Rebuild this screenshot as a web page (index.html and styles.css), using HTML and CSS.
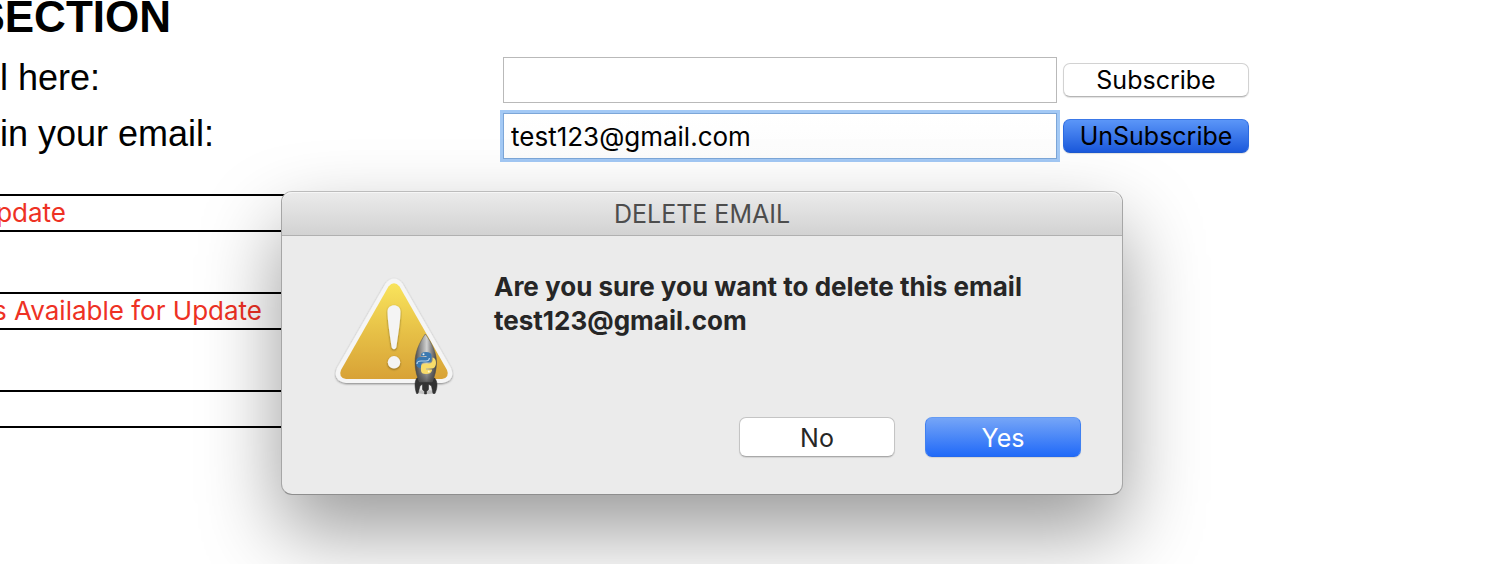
FILE: index.html
```html
<!DOCTYPE html>
<html lang="en">
<head>
<meta charset="utf-8">
<title>Email subscriptions</title>
<link rel="stylesheet" href="styles.css">
</head>
<body>
<main class="page">
  <h1 class="heading"><span>SECTION</span></h1>
  <form class="form">
    <label class="form-label" for="subscribe">l here:</label>
    <input class="entry" id="subscribe" type="text">
    <button class="push" type="button">Subscribe</button>
    <label class="form-label" for="unsubscribe">in your email:</label>
    <input class="entry entry-focus" id="unsubscribe" type="text" value="test123@gmail.com">
    <button class="push push-active" type="button">UnSubscribe</button>
  </form>
  <section class="notices">
    <p class="notice"><span class="notice-text notice-short">pdate</span></p>
    <p class="notice"><span class="notice-text">s Available for Update</span></p>
    <p class="notice"></p>
  </section>
</main>
<div class="dialog" role="alertdialog" aria-labelledby="dialog-title" aria-describedby="dialog-message">
  <h2 class="dialog-title" id="dialog-title">DELETE EMAIL</h2>
  <div class="dialog-body">
    <svg class="dialog-icon" viewBox="0 0 120 120" aria-hidden="true">
      <defs>
        <linearGradient id="gold" x1="0" y1="0" x2="0" y2="1">
          <stop offset="0" stop-color="#f9e45c"/>
          <stop offset=".5" stop-color="#e7c147"/>
          <stop offset="1" stop-color="#d8a236"/>
        </linearGradient>
        <linearGradient id="steel" x1="0" y1="0" x2="1" y2="0">
          <stop offset="0" stop-color="#484848"/>
          <stop offset=".25" stop-color="#8c8c8c"/>
          <stop offset=".55" stop-color="#d2d2d2"/>
          <stop offset=".75" stop-color="#8a8a8a"/>
          <stop offset="1" stop-color="#484848"/>
        </linearGradient>
        <linearGradient id="shade" x1="0" y1="0" x2="0" y2="1">
          <stop offset=".6" stop-color="#333" stop-opacity="0"/>
          <stop offset="1" stop-color="#333" stop-opacity=".7"/>
        </linearGradient>
        <filter id="drop" x="-10%" y="-10%" width="120%" height="125%">
          <feDropShadow dx="0" dy="1" stdDeviation="1" flood-opacity=".45"/>
        </filter>
      </defs>
      <path d="M51.5 6.5Q60-3.5 68.500 6.500L117 91Q122 104 108 106H12Q-2 104 3 91Z" fill="#f5f5f5" filter="url(#drop)"/>
      <path d="M54.500 9.500Q60 3 65.500 9.500L113 93Q116 100.500 108 102H12Q4 100.500 7 93Z" fill="url(#gold)"/>
      <g fill="#f4f4f4" filter="url(#drop)">
        <path d="M53.500 34.500C53.500 26 66.500 26 66.500 34.500C66.500 43 64.300 57 62.500 69.500C62 73 58 73 57.500 69.500C55.700 57 53.500 43 53.500 34.500Z"/>
        <circle cx="60" cy="85.300" r="6.200"/>
      </g>
      <ellipse cx="92" cy="115" rx="9" ry="2" fill="#999" opacity=".5"/>
      <path d="M83 101C80.500 104 80.500 110 82.500 116.500H84L86 109L88.500 107V112.500L90.500 114.500V117H92.500V114.500L94.500 112.500V107L97.500 109L99 116.500H101C104 110 103.500 104 100.500 101Z" fill="#333" stroke="#222" stroke-width=".5"/>
      <path d="M91.300 57C98 66 102.500 76 102.500 85C102.500 93 100.500 100 98 105H85.500C83 100 81 93 81 85C81 76 85 66 91.300 57Z" fill="url(#steel)"/>
      <path d="M91.300 57C98 66 102.500 76 102.500 85C102.500 93 100.500 100 98 105H85.500C83 100 81 93 81 85C81 76 85 66 91.300 57Z" fill="url(#shade)" stroke="#505050" stroke-width=".5"/>
      <path d="M87 80V78Q87 75 92 75Q97.500 75 97.500 78.500V82Q97.500 85.500 94 85.500H90Q87 85.500 87 88.500V91Q82 91 82 85.500Q82 80 87 80H92.500V79H87Z" fill="#3b78b0"/>
      <path d="M98.500 80.500Q102 81 102 86Q102 91.500 97 91.500H92V92.500H98V93.500Q97 97 92 97Q87 97 87 93.500V90Q87 86.500 90.500 86.500H94.500Q98.500 86.500 98.500 82.500Z" fill="#f8dc6a"/>
      <path d="M83 87Q83 84 87 84H92Q95 84 95.500 81" fill="none" stroke="#b9d3ea" stroke-width="1.200"/>
      <circle cx="89.500" cy="77.300" r="1" fill="#e8f1f8"/>
      <circle cx="94.800" cy="94.500" r="1" fill="#fff8d5"/>
    </svg>
    <p class="dialog-message" id="dialog-message">Are you sure you want to delete this email test123@gmail.com</p>
  </div>
  <div class="dialog-actions">
    <button class="choice" type="button">No</button>
    <button class="choice choice-default" type="button">Yes</button>
  </div>
</div>
</body>
</html>
```
FILE: styles.css
```css
* {
  box-sizing: border-box;
}

body {
  margin: 0;
  background: #fff;
  color: #000;
  font-family: Inter, "Noto Sans", sans-serif;
  font-size: 25px;
  overflow: hidden;
}

.page {
  overflow: hidden;
}

.heading {
  display: flex;
  justify-content: flex-end;
  width: 171px;
  height: 52px;
  margin: 0;
  font: bold 44px/34px "Liberation Sans", Arial, sans-serif;
}

.form {
  display: grid;
  grid-template-columns: 497px minmax(0, 1fr) 186px;
  grid-auto-rows: 56px;
  column-gap: 6px;
  align-items: center;
  padding-right: 249px;
}

.form-label {
  font: 36px/48px "Liberation Sans", Arial, sans-serif;
  padding-bottom: 4px;
}

.entry {
  width: 100%;
  height: 46px;
  padding: 0 7px;
  border: 1px solid #b9b9b9;
  border-radius: 0;
  outline: none;
  background: #fff;
  color: #000;
  font: inherit;
  font-size: 26px;
}

.entry-focus {
  border-color: #7ca6d8;
  background: linear-gradient(#fff, #fcfcfc);
  box-shadow: 0 0 0 3px #a3c9f5;
}

.push {
  height: 34px;
  padding: 0;
  border: 1px solid #d2d2d2;
  border-bottom-color: #b5b5b5;
  border-radius: 7px;
  background: #fff;
  box-shadow: 0 1px 1px rgba(0, 0, 0, .12);
  color: #000;
  font: inherit;
  line-height: 30px;
}

.push-active {
  border-color: #3a78e8 #2c6ae0 #1c58cf;
  background: linear-gradient(#5b96f8, #1b59dc);
}

.notices {
  display: grid;
  gap: 60px;
  width: 60%;
  padding-top: 30px;
}

.notice {
  height: 38px;
  margin: 0;
  border: solid #000;
  border-width: 2px 0;
  color: #ee3124;
  font-size: 26px;
  line-height: 34px;
}

.notice-text {
  display: flex;
  justify-content: flex-end;
  width: 262px;
  white-space: nowrap;
}

.notice-short {
  width: 66px;
}

.dialog {
  position: absolute;
  top: 191px;
  left: 281px;
  width: 842px;
  border: 1px solid #a6a6a6;
  border-color: #bcbcbc #a6a6a6 #8e8e8e;
  border-radius: 11px;
  background: #ebebeb;
  box-shadow: 0 36px 80px rgba(0, 0, 0, .4);
  color: #262626;
}

.dialog-title {
  margin: 0;
  padding-top: 2px;
  border-bottom: 1px solid #b0b0b0;
  border-radius: 10px 10px 0 0;
  background: linear-gradient(#ebebeb, #d2d2d2);
  box-shadow: inset 0 1px #f6f6f6;
  color: #4d4d4d;
  font-size: 25px;
  font-weight: 400;
  line-height: 41px;
  text-align: center;
}

.dialog-body {
  display: flex;
  gap: 40px;
  padding: 34px 40px 0 52px;
}

.dialog-icon {
  flex: none;
  width: 120px;
  height: 120px;
  margin-top: 7px;
}

.dialog-message {
  width: 560px;
  margin: 0;
  font-size: 26px;
  font-optical-sizing: none;
  font-weight: 700;
  line-height: 34px;
}

.dialog-actions {
  display: flex;
  justify-content: flex-end;
  gap: 30px;
  padding: 20px 41px 37px;
}

.choice {
  width: 156px;
  height: 40px;
  padding: 2px 0 0;
  border: 1px solid #c4c4c4;
  border-bottom-color: #a9a9a9;
  border-radius: 7px;
  background: #fff;
  box-shadow: 0 1px 1px rgba(0, 0, 0, .1);
  color: #262626;
  font: inherit;
}

.choice-default {
  border-color: #659bf3 #4080f0 #2468ee;
  background: linear-gradient(#75a5f7, #216af8);
  color: #fff;
}
```
